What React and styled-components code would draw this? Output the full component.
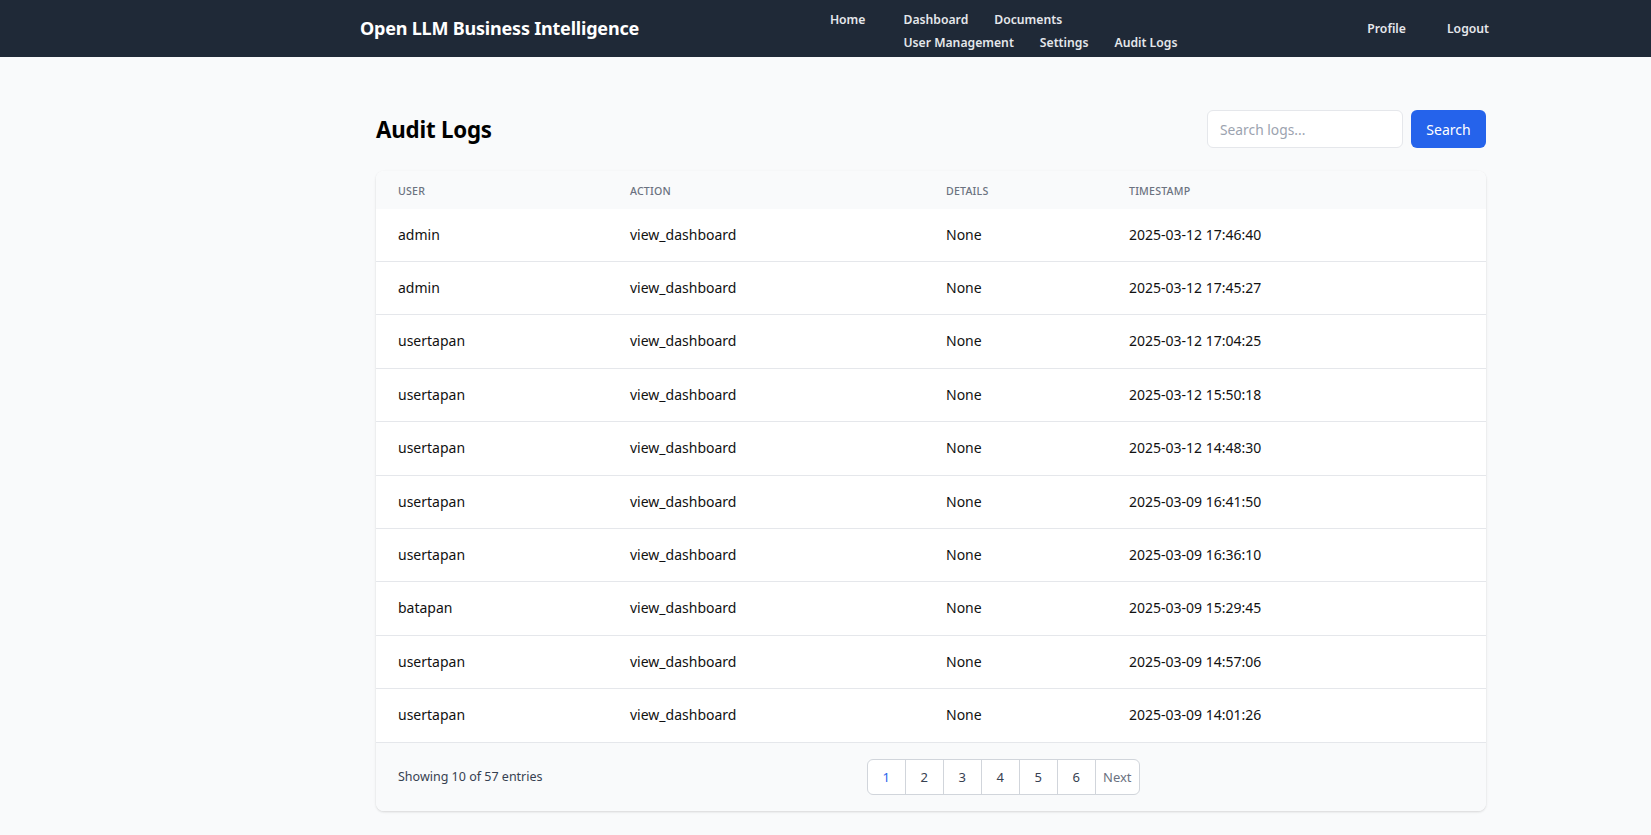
import React from "react";
import styled, { createGlobalStyle } from "styled-components";

const FONT = `"Noto Sans", "Open Sans", "Liberation Sans", sans-serif`;

const Global = createGlobalStyle`
  html, body { margin: 0; padding: 0; }
  body {
    background: #f9fafb;
    font-family: ${FONT};
    color: #111;
    -webkit-font-smoothing: antialiased;
  }
  * { box-sizing: border-box; }
`;

const Header = styled.header`
  height: 57px;
  background: #1f2937;
  display: flex;
  align-items: center;
  justify-content: space-between;
  padding: 0 162px 0 360px;
`;

const Brand = styled.div`
  color: #fff;
  font-size: 18px;
  font-weight: 700;
  letter-spacing: -0.2px;
  padding-bottom: 2px;
`;

const Nav = styled.nav`
  display: flex;
  align-items: flex-start;
  gap: 38px;
  padding-top: 5px;
  margin-left: 5px;
`;

const NavWrap = styled.div`
  display: flex;
  flex-wrap: wrap;
  width: 278px;
  column-gap: 26px;
  row-gap: 3px;
`;

const NavLink = styled.a`
  color: #e5e7eb;
  font-size: 12.2px;
  font-weight: 600;
  line-height: 20px;
  text-decoration: none;
  white-space: nowrap;
`;

const UserNav = styled.div`
  display: flex;
  gap: 41px;
  align-items: center;
`;

const Main = styled.main`
  padding: 53px 165px 40px 376px;
`;

const TitleRow = styled.div`
  display: flex;
  justify-content: space-between;
  align-items: center;
  margin-bottom: 23px;
`;

const Title = styled.h1`
  margin: 0;
  font-size: 22.3px;
  font-weight: 700;
  color: #000;
  letter-spacing: -0.2px;
`;

const SearchForm = styled.form`
  display: flex;
  gap: 8px;
`;

const SearchInput = styled.input`
  width: 196px;
  height: 38px;
  border: 1px solid #e5e7eb;
  border-radius: 6px;
  padding: 0 12px;
  font-family: ${FONT};
  font-size: 13.8px;
  background: #fff;
  outline: none;
  &::placeholder { color: #9ca3af; }
`;

const SearchButton = styled.button`
  height: 38px;
  width: 75px;
  border: none;
  border-radius: 6px;
  background: #2563eb;
  color: #fff;
  font-family: ${FONT};
  font-size: 14px;
  cursor: pointer;
`;

const Card = styled.div`
  background: #fff;
  border-radius: 8px;
  box-shadow: 0 1px 3px rgba(0,0,0,0.1), 0 1px 2px rgba(0,0,0,0.05);
  overflow: hidden;
`;

const Table = styled.table`
  width: 100%;
  border-collapse: collapse;
  table-layout: fixed;
`;

const Th = styled.th`
  text-align: left;
  background: #f9fafb;
  color: #6b7280;
  font-size: 10.6px;
  font-weight: 500;
  text-transform: uppercase;
  letter-spacing: 0.2px;
  padding: 13px 22px 9px;
  line-height: 15.5px;
`;

const Td = styled.td`
  padding: 16px 22px;
  font-size: 14px;
  line-height: 20.4px;
  color: #111;
  border-bottom: 1px solid #e5e7eb;
`;

const Footer = styled.div`
  background: #f9fafb;
  display: flex;
  align-items: center;
  justify-content: space-between;
  padding: 16px 22px;
`;

const Showing = styled.div`
  font-size: 12.5px;
  color: #374151;
`;

const Pager = styled.div`
  display: flex;
`;

const PageBtn = styled.button`
  height: 36px;
  min-width: ${(p) => (p.$wide ? "45px" : "39px")};
  padding: 0 6px;
  margin-left: -1px;
  border: 1px solid #d1d5db;
  background: #fff;
  color: ${(p) => (p.$active ? "#2563eb" : p.$muted ? "#6b7280" : "#374151")};
  font-family: ${FONT};
  font-size: 13px;
  cursor: pointer;
  &:first-child { margin-left: 0; border-radius: 6px 0 0 6px; }
  &:last-child { border-radius: 0 6px 6px 0; }
`;

const Spacer = styled.div``;

const rows = [
  ["admin", "2025-03-12 17:46:40"],
  ["admin", "2025-03-12 17:45:27"],
  ["usertapan", "2025-03-12 17:04:25"],
  ["usertapan", "2025-03-12 15:50:18"],
  ["usertapan", "2025-03-12 14:48:30"],
  ["usertapan", "2025-03-09 16:41:50"],
  ["usertapan", "2025-03-09 16:36:10"],
  ["batapan", "2025-03-09 15:29:45"],
  ["usertapan", "2025-03-09 14:57:06"],
  ["usertapan", "2025-03-09 14:01:26"],
];

export default function App() {
  return (
    <>
      <Global />
      <Header>
        <Brand>Open LLM Business Intelligence</Brand>
        <Nav>
          <NavLink href="#">Home</NavLink>
          <NavWrap>
            <NavLink href="#">Dashboard</NavLink>
            <NavLink href="#">Documents</NavLink>
            <NavLink href="#">User Management</NavLink>
            <NavLink href="#">Settings</NavLink>
            <NavLink href="#">Audit Logs</NavLink>
          </NavWrap>
        </Nav>
        <UserNav>
          <NavLink href="#">Profile</NavLink>
          <NavLink href="#">Logout</NavLink>
        </UserNav>
      </Header>
      <Main>
        <TitleRow>
          <Title>Audit Logs</Title>
          <SearchForm onSubmit={(e) => e.preventDefault()}>
            <SearchInput placeholder="Search logs..." />
            <SearchButton type="submit">Search</SearchButton>
          </SearchForm>
        </TitleRow>
        <Card>
          <Table>
            <colgroup>
              <col style={{ width: "232px" }} />
              <col style={{ width: "316px" }} />
              <col style={{ width: "183px" }} />
              <col />
            </colgroup>
            <thead>
              <tr>
                <Th>User</Th>
                <Th>Action</Th>
                <Th>Details</Th>
                <Th>Timestamp</Th>
              </tr>
            </thead>
            <tbody>
              {rows.map(([u, t], i) => (
                <tr key={i}>
                  <Td>{u}</Td>
                  <Td>view_dashboard</Td>
                  <Td>None</Td>
                  <Td>{t}</Td>
                </tr>
              ))}
            </tbody>
          </Table>
          <Footer>
            <Showing>Showing 10 of 57 entries</Showing>
            <Pager>
              <PageBtn $active>1</PageBtn>
              <PageBtn>2</PageBtn>
              <PageBtn>3</PageBtn>
              <PageBtn>4</PageBtn>
              <PageBtn>5</PageBtn>
              <PageBtn>6</PageBtn>
              <PageBtn $wide $muted>Next</PageBtn>
            </Pager>
            <Spacer />
          </Footer>
        </Card>
      </Main>
    </>
  );
}
